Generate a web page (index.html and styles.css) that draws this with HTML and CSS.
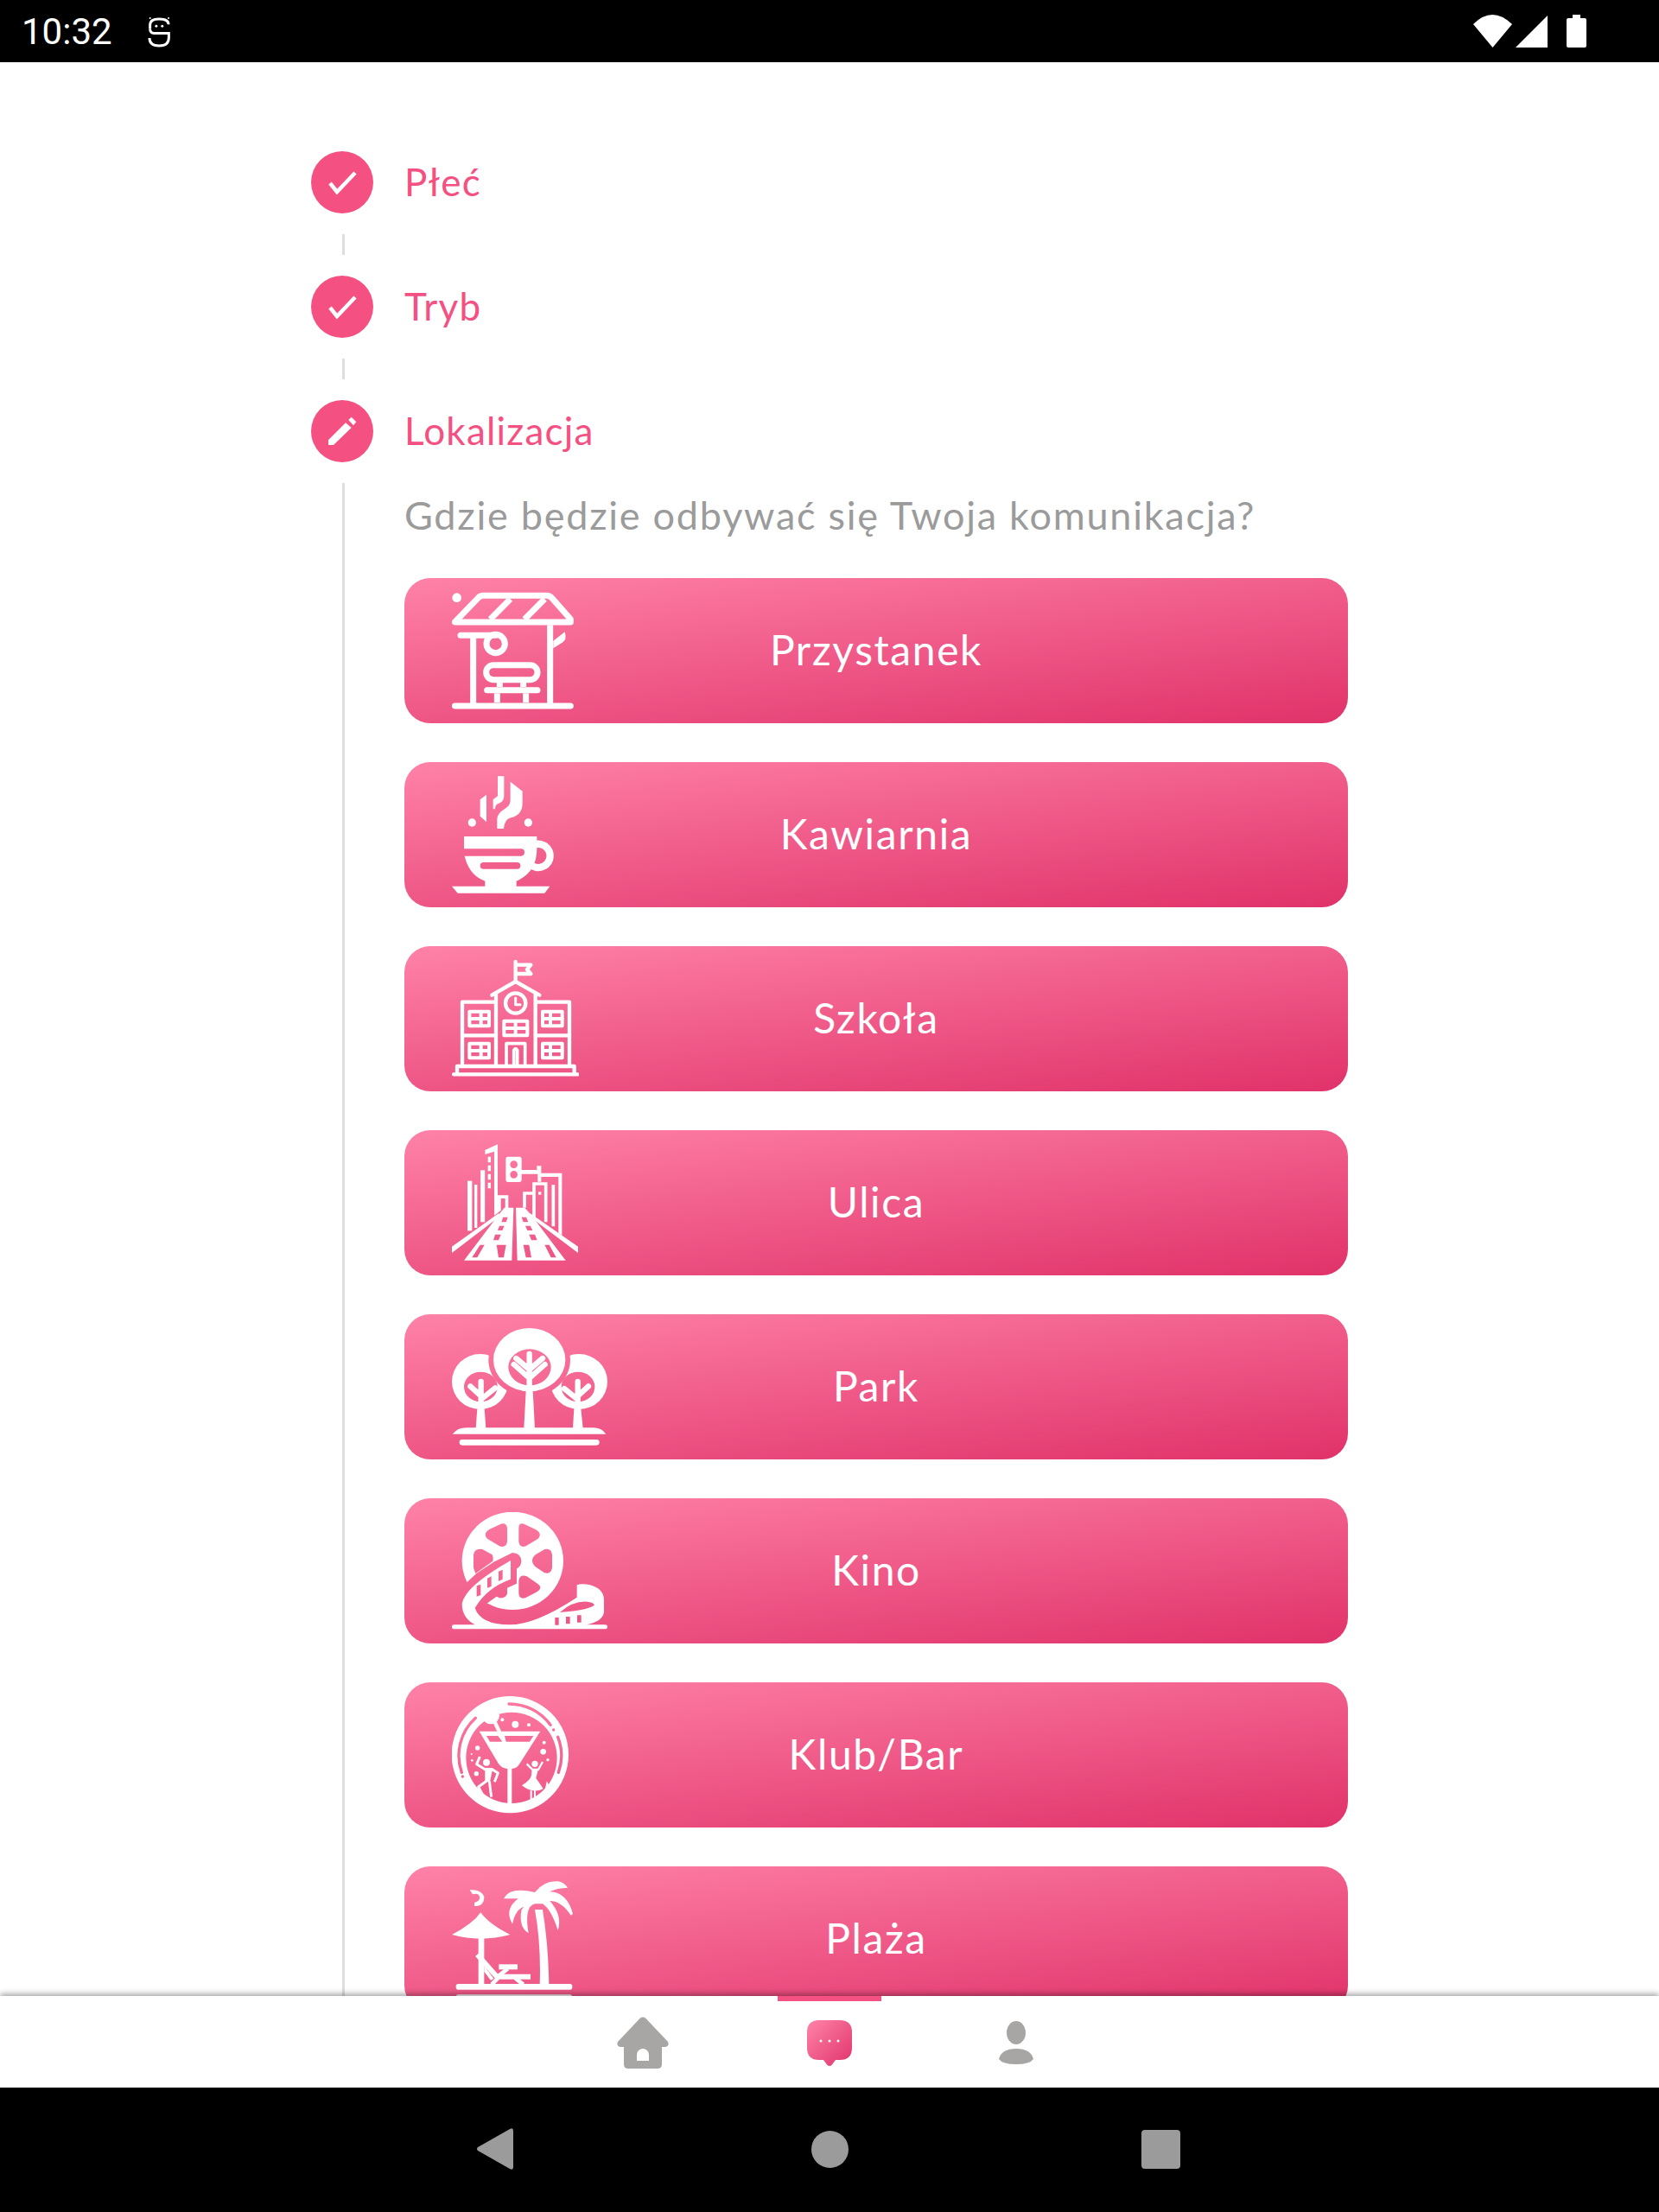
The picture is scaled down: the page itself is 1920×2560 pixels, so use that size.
FILE: index.html
```html
<!DOCTYPE html>
<html lang="pl">
<head>
    <meta charset="UTF-8">
    <meta name="viewport" content="width=device-width, initial-scale=1.0">
    <title>Lokalizacja</title>
    <link rel="stylesheet" href="styles.css">
</head>
<body>

    <!-- Status bar -->
    <header class="status-bar">
        <span class="clock">10:32</span>
        <svg class="app-glyph" viewBox="30 20 85 110" fill="none" stroke="#fff" stroke-width="9">
            <path d="M38 66 V52 Q38 31 70 31 Q103 31 103 50"/>
            <path d="M38 66 Q38 81 52 81 H104 V96 Q104 125 70 125 Q36 125 36 98"/>
            <circle cx="38" cy="28" r="3" fill="#fff" stroke="none"/>
            <circle cx="103" cy="28" r="3" fill="#fff" stroke="none"/>
            <circle cx="60" cy="56" r="4.500" fill="#fff" stroke="none"/>
            <circle cx="81" cy="56" r="4.500" fill="#fff" stroke="none"/>
        </svg>
        <div class="status-icons">
            <svg width="45" height="38" viewBox="0 0 45 38"><path d="M0 11 Q22 -11 45 11 L22.500 38 Z" fill="#fff"/></svg>
            <svg width="37" height="37" viewBox="0 0 37 37"><path d="M0 37 L37 0 V37 Z" fill="#fff"/></svg>
            <svg class="battery" width="23" height="38" viewBox="0 0 23 38"><path d="M7 0 H16 V4 H21 Q23 4 23 6 V36 Q23 38 21 38 H2 Q0 38 0 36 V6 Q0 4 2 4 H7 Z" fill="#fff"/></svg>
        </div>
    </header>

    <!-- Stepper -->
    <main class="content">
        <div class="step">
            <div class="step-badge">
                <svg viewBox="0 0 72 72"><path d="M22 37 L30 47 L51 25" fill="none" stroke="#fff" stroke-width="4.500"/></svg>
            </div>
            <span class="step-label">Płeć</span>
        </div>
        <div class="step-link"></div>
        <div class="step">
            <div class="step-badge">
                <svg viewBox="0 0 72 72"><path d="M22 37 L30 47 L51 25" fill="none" stroke="#fff" stroke-width="4.500"/></svg>
            </div>
            <span class="step-label">Tryb</span>
        </div>
        <div class="step-link"></div>
        <div class="step">
            <div class="step-badge">
                <svg viewBox="0 0 72 72" fill="#fff">
                    <path d="M20 46.300 L40 26.300 L46.700 32 L26 52 H20 Z"/>
                    <path d="M43.300 23 L46.700 19.700 L52.300 25.300 L49 29.300 Z"/>
                </svg>
            </div>
            <span class="step-label">Lokalizacja</span>
        </div>

        <div class="step-body">
            <p class="question">Gdzie będzie odbywać się Twoja komunikacja?</p>

            <div class="place-list">
                <!-- Przystanek -->
                <button class="place">
                    <svg class="place-icon" viewBox="190 75 422 408" fill="none" stroke="#fff" stroke-width="21" stroke-linejoin="round" stroke-linecap="round">
                        <circle cx="207" cy="95" r="16" fill="#fff" stroke="none"/>
                        <path d="M200 180 L280 97 Q288 88 298 88 H518 Q530 88 538 97 L602 170 V180 Z"/>
                        <path d="M323 170 L393 100 M442 170 L512 100" stroke-linecap="butt"/>
                        <path d="M531 190 V470 M264 226 V470" stroke-linecap="butt"/>
                        <path d="M220 226 H342"/>
                        <circle cx="342" cy="255" r="32"/>
                        <path d="M200 471 H602"/>
                        <rect x="309" y="329" width="178" height="51" rx="25"/>
                        <path d="M356 390 V405 M438 390 V405 M347 427 V460 M447 427 V460" stroke-linecap="butt"/>
                        <path d="M312 416 H487"/>
                        <path d="M542 245 L582 214 Q590 240 575 250 L542 271 Z" fill="#fff" stroke="none"/>
                    </svg>
                    <span class="place-name">Przystanek</span>
                </button>

                <!-- Kawiarnia -->
                <button class="place">
                    <svg class="place-icon" viewBox="190 715 422 408" fill="#fff">
                        <path d="M349 716 H371 V785 Q371 805 350 812 Q340 816 340 830 H333 V797 L349 785 Z"/>
                        <path d="M393 735 L435 768 V810 Q435 850 395 860 Q372 866 370 898 H347 V865 Q347 845 375 828 Q393 818 393 800 Z"/>
                        <path d="M288 797 L310 780 V875 L288 855 Z"/>
                        <circle cx="260" cy="877" r="14"/>
                        <circle cx="455" cy="877" r="14"/>
                        <path fill-rule="evenodd" d="M234 993 H430 Q442 993 442 980 Q442 968 430 968 H232 V925 H485 V968 Q485 1050 414 1080 V1098 H530 L512 1122 H210 L190 1098 H305 V1080 Q250 1060 234 993 Z M300 1015 Q288 1015 288 1027 Q288 1038 300 1038 H416 Q428 1038 428 1027 Q428 1015 416 1015 Z"/>
                        <path d="M478 953 A41 41 0 1 1 458 1018" fill="none" stroke="#fff" stroke-width="25"/>
                    </svg>
                    <span class="place-name">Kawiarnia</span>
                </button>

                <!-- Szkola -->
                <button class="place">
                    <svg class="place-icon" viewBox="190 65 442 408" fill="none" stroke="#fff" stroke-width="13" stroke-linecap="round" stroke-linejoin="round">
                        <path d="M411 71 V140 M411 82 H464 L451 98 L464 113 H411"/>
                        <path d="M329 187 L411 140 L494 187"/>
                        <path d="M343 180 V430 M480 180 V430 M343 211 H226 V430 M480 211 H598 V430"/>
                        <path d="M226 327 H343 M480 327 H598"/>
                        <circle cx="411" cy="215" r="35"/>
                        <path d="M411 197 V220 H427" stroke-width="9"/>
                        <g stroke-width="12">
                            <rect x="251" y="244" width="68" height="50"/>
                            <path d="M251 269 H319 M291 244 V294"/>
                            <rect x="505" y="244" width="68" height="50"/>
                            <path d="M505 269 H573 M532 244 V294"/>
                            <rect x="251" y="355" width="68" height="50"/>
                            <path d="M251 380 H319 M291 355 V405"/>
                            <rect x="505" y="355" width="68" height="50"/>
                            <path d="M505 380 H573 M532 355 V405"/>
                            <rect x="371" y="277" width="81" height="50"/>
                            <path d="M371 302 H452 M411 277 V327"/>
                        </g>
                        <path d="M379 430 V355 H444 V430 M405 430 V378 Q411 368 417 378 V430" stroke-width="11"/>
                        <path d="M208 455 V434 H615 V455"/>
                        <path d="M196 462 H626"/>
                    </svg>
                    <span class="place-name">Szkoła</span>
                </button>

                <!-- Ulica -->
                <button class="place">
                    <svg class="place-icon" viewBox="190 704 438 408" fill="none" stroke="#fff" stroke-width="11">
                        <path fill="#fff" stroke="none" d="M190 1060 L352 945 L360 952 L190 1082 Z M628 1060 L462 945 L455 952 L628 1082 Z"/>
                        <path fill="#fff" stroke="none" fill-rule="evenodd" d="M232 1108 L352 950 L372 925 H404 L398 1108 Z M368 958 L384 958 L378 975 L362 975 Z M355 988 L372 988 L365 1004 L349 1004 Z M340 1018 L360 1018 L352 1038 L334 1038 Z M288 1054 L303 1054 L278 1098 L260 1098 Z M345 1054 L378 1054 L370 1098 L352 1098 Z"/>
                        <path fill="#fff" stroke="none" fill-rule="evenodd" d="M417 1108 L412 925 H443 L465 950 L585 1108 Z M432 958 L448 958 L455 975 L438 975 Z M445 988 L462 988 L470 1004 L452 1004 Z M458 1018 L478 1018 L486 1038 L466 1038 Z M438 1054 L458 1054 L466 1098 L447 1098 Z M512 1054 L528 1054 L552 1098 L534 1098 Z"/>
                        <path fill="#fff" stroke="none" d="M305 725 L349 705 V882 H386 V930 H375 V893 H360 V935 L337 952 V730 L305 740 Z"/>
                        <path d="M252 1005 V832" stroke-width="16"/>
                        <path d="M273 845 V995" stroke-width="10"/>
                        <path d="M297 795 V975" stroke-width="15"/>
                        <path d="M320 748 V866" stroke-dasharray="20 10" stroke-width="10"/>
                        <path fill="#fff" stroke="none" fill-rule="evenodd" d="M385 748 H424 Q432 748 432 756 V794 H485 V780 H500 V805 H572 V1022 L560 1012 V818 H500 V835 H488 V808 H432 V828 Q432 836 424 836 H385 Q377 836 377 828 V756 Q377 748 385 748 Z M405 762 A13 13 0 1 0 405 788 A13 13 0 1 0 405 762 Z M405 797 A13 13 0 1 0 405 823 A13 13 0 1 0 405 797 Z"/>
                        <path d="M442 925 V875 H473 M475 962 V842 H516 V975 M542 846 V990"/>
                        <rect x="490" y="870" width="10" height="10" fill="#fff" stroke="none"/>
                    </svg>
                    <span class="place-name">Ulica</span>
                </button>

                <!-- Park -->
                <button class="place">
                    <svg class="place-icon" viewBox="190 52 540 408" fill="#fff">
                        <mask id="park-gap">
                            <rect x="180" y="40" width="560" height="430" fill="#fff"/>
                            <ellipse cx="459" cy="162" rx="142" ry="128" fill="#000"/>
                        </mask>
                        <g mask="url(#park-gap)">
                            <path fill-rule="evenodd" d="M190 238 A98 96 0 1 0 386 238 A98 96 0 1 0 190 238 Z M232 256 A58 52 0 1 0 348 256 A58 52 0 1 0 232 256 Z"/>
                            <path fill-rule="evenodd" d="M532 238 A99 96 0 1 0 730 238 A99 96 0 1 0 532 238 Z M570 256 A58 52 0 1 0 686 256 A58 52 0 1 0 570 256 Z"/>
                            <path d="M291 238 V335 M254 254 L291 288 M340 260 L291 300 M627 238 V335 M580 262 L627 300 M664 254 L627 288" fill="none" stroke="#fff" stroke-width="19" stroke-linecap="round"/>
                        </g>
                        <path fill-rule="evenodd" d="M334 162 A125 110 0 1 0 584 162 A125 110 0 1 0 334 162 Z M386 188 A74 63 0 1 0 534 188 A74 63 0 1 0 386 188 Z"/>
                        <path d="M459 142 V270 M405 178 L459 226 M513 178 L459 226 M413 157 L459 196 M505 157 L459 196" fill="none" stroke="#fff" stroke-width="19" stroke-linecap="round"/>
                        <path d="M447 270 H471 L478 400 H440 Z M278 332 H303 L308 400 H273 Z M614 332 H638 L645 400 H610 Z"/>
                        <path d="M192 420 Q210 398 240 398 H680 Q710 398 725 420 Z"/>
                        <rect x="216" y="439" width="486" height="20" rx="10"/>
                    </svg>
                    <span class="place-name">Park</span>
                </button>

                <!-- Kino -->
                <button class="place">
                    <svg class="place-icon" viewBox="190 692 540 408" fill="#fff">
                        <mask id="reel-cut">
                            <rect x="180" y="680" width="560" height="430" fill="#fff"/>
                            <path fill="#000" d="M200 975 L243 935 L275 905 L335 865 L400 833 Q430 835 431 862 Q430 880 415 888 V940 L382 955 V975 Q378 992 355 990 L345 985 L310 1010 L270 1060 L200 1060 Z"/>
                        </mask>
                        <path mask="url(#reel-cut)" fill-rule="evenodd" d="M225 861 A176 170 0 1 0 577 861 A176 170 0 1 0 225 861 Z
                            M320 752 L360 733 Q381 728 382 750 V795 Q378 818 355 810 L315 786 Q295 768 320 752 Z
                            M480 752 L440 733 Q421 728 422 750 V795 Q426 818 447 810 L487 786 Q507 768 480 752 Z
                            M480 840 L512 821 Q536 816 538 840 V885 Q534 910 510 902 L480 882 Q458 860 480 840 Z
                            M480 972 L445 990 Q422 996 422 972 V930 Q426 906 450 915 L487 940 Q510 955 480 972 Z
                            M330 840 L296 821 Q268 816 265 840 V885 L272 905 L332 862 Q335 850 330 840 Z"/>
                        <path fill-rule="evenodd" d="M394 860 V925 Q310 955 270 1025 Q290 1083 390 1083 Q480 1083 624 988 V945 Q640 938 670 945 Q716 958 718 995 V1040 Q712 1072 658 1083 H720 Q730 1083 730 1090 Q730 1098 720 1098 H198 Q190 1098 190 1090 Q190 1083 198 1083 H270 Q225 1060 225 1010 Q235 950 394 860 Z
                            M276 948 L290 943 V980 L276 985 Z M313 922 L327 915 V950 L313 955 Z M352 898 L366 892 V925 L352 932 Z
                            M548 1058 H561 V1084 H548 Z M586 1055 H600 V1080 H586 Z M625 1050 H639 V1075 H625 Z
                            M565 1040 Q610 1000 660 1003 Q680 1005 685 1014 Q670 1032 565 1040 Z"/>
                    </svg>
                    <span class="place-name">Kino</span>
                </button>

                <!-- Klub/Bar -->
                <button class="place">
                    <svg class="place-icon" viewBox="190 70 422 408" fill="#fff">
                        <mask id="ring-slit" maskUnits="userSpaceOnUse" x="180" y="60" width="440" height="430">
                            <rect x="180" y="60" width="440" height="430" fill="#fff"/>
                            <path d="M388 97 A176 176 0 0 1 532 170 M558 212 A176 176 0 0 1 560 335 M272 146 A176 176 0 0 0 224 335" fill="none" stroke="#000" stroke-width="10" stroke-linecap="round"/>
                            <circle cx="227" cy="349" r="5" fill="#000"/>
                            <circle cx="543" cy="187" r="5" fill="#000"/>
                        </mask>
                        <path mask="url(#ring-slit)" fill-rule="evenodd" d="M189 273 A203 203 0 1 0 595 273 A203 203 0 1 0 189 273 Z M239 284 A158 158 0 1 0 555 284 A158 158 0 1 0 239 284 Z"/>
                        <circle cx="325" cy="137" r="30"/>
                        <path fill-rule="evenodd" d="M285 192 H497 L425 305 Q415 322 398 322 V442 H383 V322 Q365 322 352 305 Z M310 208 L322 228 H365 L350 208 Z M373 208 L378 228 H460 L473 208 Z"/>
                        <path d="M325 130 L360 205" fill="none" stroke="#fff" stroke-width="13"/>
                        <circle cx="410" cy="168" r="12"/><circle cx="365" cy="152" r="6"/><circle cx="457" cy="170" r="6"/>
                        <circle cx="279" cy="250" r="8"/><circle cx="258" cy="271" r="3"/><circle cx="260" cy="293" r="4"/><circle cx="275" cy="339" r="8"/>
                        <circle cx="510" cy="231" r="6"/><circle cx="507" cy="263" r="10"/><circle cx="523" cy="291" r="5"/>
                        <!-- dancers -->
                        <circle cx="310" cy="300" r="12"/>
                        <path d="M287 280 L276 306 L305 324 H330 L350 337 L338 368 M310 365 L282 385 L298 415 M320 365 L327 420" fill="none" stroke="#fff" stroke-width="9" stroke-linejoin="round"/>
                        <path d="M305 320 H332 L322 368 H305 Z"/>
                        <circle cx="478" cy="305" r="11"/>
                        <path d="M450 305 L470 325 H490 L505 298" fill="none" stroke="#fff" stroke-width="7"/>
                        <path d="M468 322 H490 L482 355 Q500 380 507 392 Q470 410 433 380 Q462 362 466 345 Z"/>
                        <path d="M465 398 V432 M478 398 V425" stroke="#fff" stroke-width="6"/>
                        <path d="M520 365 L532 392 L505 422 L480 424 L510 405 Z"/>
                    </svg>
                    <span class="place-name">Klub/Bar</span>
                </button>

                <!-- Plaza -->
                <button class="place">
                    <svg class="place-icon" viewBox="190 708 422 408" fill="#fff">
                        <path d="M252 742 Q290 738 302 765 Q302 800 268 798 L268 786 Q290 780 286 765 Q282 752 262 757 Z"/>
                        <path d="M190 897 Q262 860 290 820 Q318 860 392 897 Q290 925 190 897 Z"/>
                        <rect x="282" y="905" width="20" height="165"/>
                        <path d="M278 966 L346 1043 H463" fill="none" stroke="#fff" stroke-width="18"/>
                        <path d="M353 1009 H418" fill="none" stroke="#fff" stroke-width="18"/>
                        <path d="M384 1015 L350 1042 M350 1048 L328 1070 M410 1048 L438 1070" fill="none" stroke="#fff" stroke-width="14"/>
                        <path d="M302 1005 L335 1050 L325 1056 L302 1025 Z"/>
                        <path d="M478 810 H505 Q525 930 527 1072 H495 Q500 930 478 810 Z"/>
                        <path d="M478 750 Q510 708 560 712 Q580 716 592 734 Q555 735 530 748 Q590 750 610 825 L603 830 Q570 780 530 780 Q575 830 558 882 Q535 810 505 790 H478 Q440 800 456 892 Q420 870 432 810 L440 800 Q410 810 400 860 Q370 810 420 772 L370 772 Q390 730 478 750 Z"/>
                        <rect x="204" y="1068" width="404" height="20" rx="8"/>
                        <rect x="204" y="1105" width="404" height="20" rx="8"/>
                    </svg>
                    <span class="place-name">Plaża</span>
                </button>
            </div>
        </div>
    </main>

    <!-- Bottom tabs -->
    <nav class="tab-bar">
        <a class="tab">
            <svg width="60" height="60" viewBox="0 0 60 60"><path fill="#a8a5a5" fill-rule="evenodd" d="M27 1.500 Q30 -0.500 33 1.500 L59 29 Q61 34 56 35 H52 V55 Q52 60 47 60 H13 Q8 60 8 55 V35 H4 Q-1 34 1 29 Z M23 51 H37 V44 A7 7 0 0 0 23 44 Z"/></svg>
        </a>
        <a class="tab tab-active">
            <svg width="52" height="53" viewBox="0 0 52 53">
                <defs>
                    <linearGradient id="chat-fill" x1="0" y1="0" x2="1" y2="1">
                        <stop offset="0" stop-color="#ff84a9"/>
                        <stop offset="1" stop-color="#e0336b"/>
                    </linearGradient>
                </defs>
                <path fill="url(#chat-fill)" d="M14 0 H38 Q52 0 52 14 V32 Q52 46 38 46 H33 L28.500 52 Q26 54 23.500 52 L19 46 H14 Q0 46 0 32 V14 Q0 0 14 0 Z"/>
                <circle cx="16" cy="24" r="1.500" fill="#fff"/>
                <circle cx="26" cy="24" r="1.500" fill="#fff"/>
                <circle cx="36" cy="24" r="1.500" fill="#fff"/>
            </svg>
        </a>
        <a class="tab">
            <svg width="40" height="50" viewBox="0 0 40 50" fill="#a8a5a5">
                <ellipse cx="20" cy="13.500" rx="11" ry="13.500"/>
                <path d="M0 44 Q3 32 20 32 Q37 32 40 44 Q36 50 20 50 Q4 50 0 44 Z"/>
            </svg>
        </a>
    </nav>

    <!-- System navigation -->
    <footer class="system-nav">
        <svg width="42" height="48" viewBox="0 0 42 48"><path fill="#9b9b9b" d="M1 22 L38 1 Q42 -1 42 3 V45 Q42 49 38 47 L1 26 Q-1 24 1 22 Z"/></svg>
        <div class="sys-circle"></div>
        <div class="sys-square"></div>
    </footer>

</body>
</html>
```

FILE: styles.css
```css
/* Reset styles */
* {
    margin: 0;
    padding: 0;
    box-sizing: border-box;
}

body {
    width: 1920px;
    height: 2560px;
    display: flex;
    flex-direction: column;
    font-family: 'Lato', sans-serif;
    background: #fff;
    overflow: hidden;
}

/* Status bar */
.status-bar {
    height: 72px;
    flex-shrink: 0;
    background: #000;
    color: #fff;
    display: flex;
    align-items: center;
    padding: 0 84px 0 25px;
}

.clock {
    font-family: 'Roboto', sans-serif;
    font-size: 42px;
}

.app-glyph {
    width: 28px;
    height: 37px;
    margin-left: 41px;
}

.status-icons {
    margin-left: auto;
    display: flex;
    align-items: center;
    gap: 4px;
}

.battery {
    margin-left: 18px;
}

/* Stepper */
.content {
    height: 2238px;
    flex-shrink: 0;
    overflow: hidden;
    padding: 103px 360px 0 360px;
}

.step {
    display: flex;
    align-items: center;
    gap: 36px;
}

.step-badge {
    width: 72px;
    height: 72px;
    border-radius: 50%;
    background: #f55082;
    flex-shrink: 0;
}

.step-badge svg {
    display: block;
}

.step-label {
    font-size: 44px;
    letter-spacing: 1.2px;
    line-height: 68px;
    padding-bottom: 3px;
    color: #f55082;
}

.step-link {
    width: 3px;
    height: 24px;
    margin: 24px 0 24px 36px;
    background: #dedede;
}

.step-body {
    margin: 24px 0 0 36px;
    padding: 9px 0 200px 69px;
    border-left: 3px solid #dedede;
}

.question {
    font-size: 45px;
    letter-spacing: 1.75px;
    line-height: 56px;
    color: #9b9b9b;
    margin-bottom: 45px;
}

.place-list {
    display: flex;
    flex-direction: column;
    gap: 45px;
}

.place {
    display: grid;
    grid-template-columns: 1fr auto 1fr;
    align-items: center;
    height: 168px;
    padding: 16px 55px;
    border: none;
    border-radius: 30px;
    background: linear-gradient(173deg, #ff82a8, #e0326a);
    color: #fff;
    font-family: inherit;
    text-align: center;
}

.place-icon {
    height: 136px;
    width: auto;
    display: block;
}

.place-name {
    font-size: 48px;
    letter-spacing: 1.6px;
    padding-bottom: 3px;
}

/* Bottom tabs */
.tab-bar {
    height: 106px;
    flex-shrink: 0;
    display: flex;
    justify-content: center;
    background: #fff;
    position: relative;
    box-shadow: 0 -2px 7px rgba(0, 0, 0, 0.4);
}

.tab {
    width: 216px;
    display: flex;
    align-items: center;
    justify-content: center;
    padding-top: 2px;
    position: relative;
}

.tab-active::before {
    content: '';
    position: absolute;
    top: 0;
    left: 48px;
    width: 120px;
    height: 6px;
    background: #f55082;
}

/* System navigation */
.system-nav {
    flex: 1;
    background: #000;
    display: flex;
    align-items: center;
    padding-left: 552px;
    padding-bottom: 2px;
}

.sys-circle {
    width: 43px;
    height: 43px;
    margin-left: 345px;
    border-radius: 50%;
    background: #9b9b9b;
}

.sys-square {
    width: 45px;
    height: 45px;
    margin-left: 339px;
    border-radius: 4px;
    background: #9b9b9b;
}
```
